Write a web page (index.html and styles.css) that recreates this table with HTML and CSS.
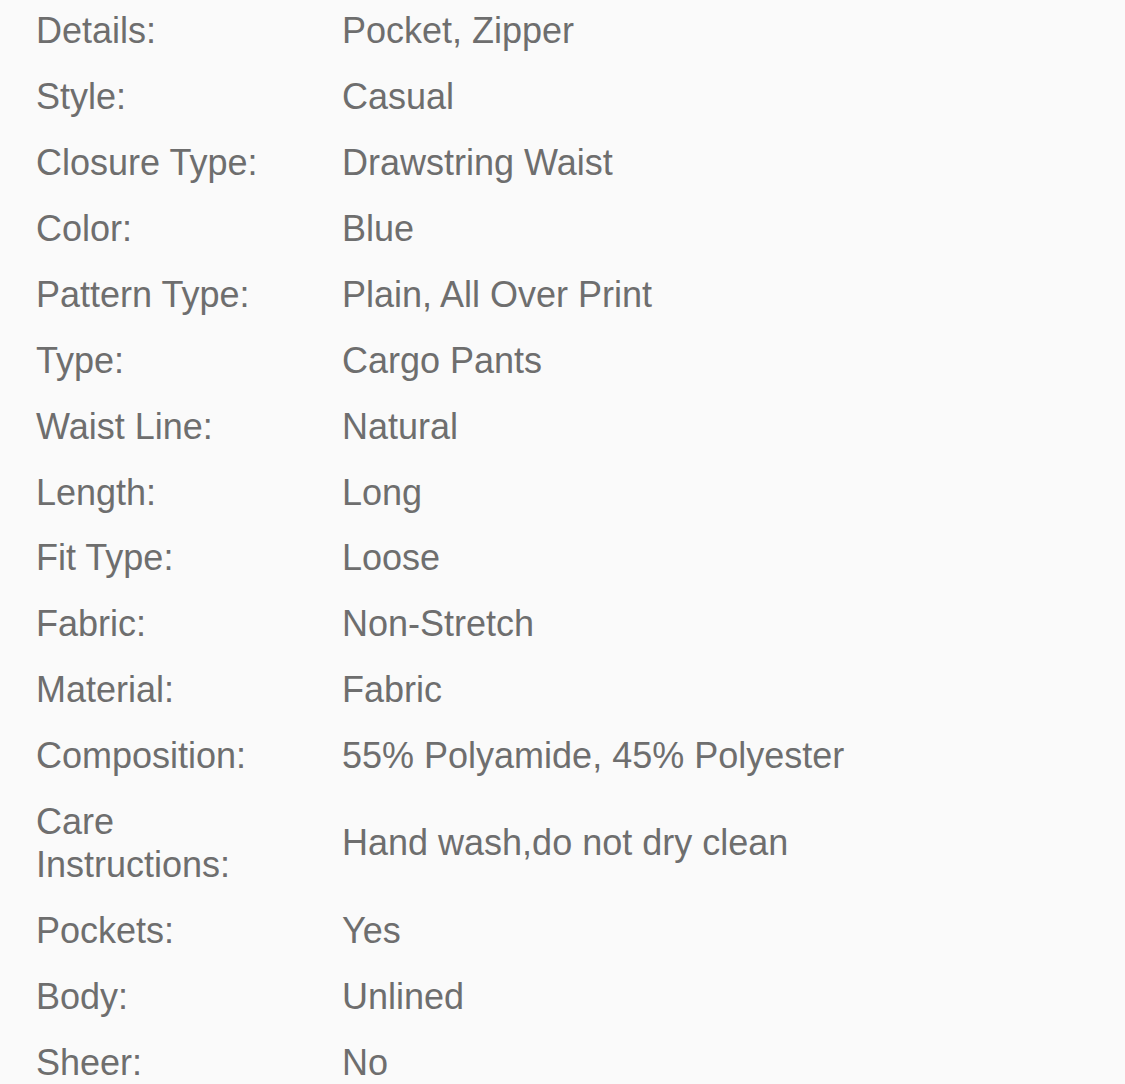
FILE: index.html
```html
<!DOCTYPE html>
<html>
<head>
<meta charset="utf-8">
<link rel="stylesheet" href="styles.css">
</head>
<body>
<div class="specs">
  <div class="row"><div class="label">Details:</div><div class="value">Pocket, Zipper</div></div>
  <div class="row"><div class="label">Style:</div><div class="value">Casual</div></div>
  <div class="row"><div class="label">Closure Type:</div><div class="value">Drawstring Waist</div></div>
  <div class="row"><div class="label">Color:</div><div class="value">Blue</div></div>
  <div class="row"><div class="label">Pattern Type:</div><div class="value">Plain, All Over Print</div></div>
  <div class="row"><div class="label">Type:</div><div class="value">Cargo Pants</div></div>
  <div class="row"><div class="label">Waist Line:</div><div class="value">Natural</div></div>
  <div class="row"><div class="label">Length:</div><div class="value">Long</div></div>
  <div class="row"><div class="label">Fit Type:</div><div class="value">Loose</div></div>
  <div class="row"><div class="label">Fabric:</div><div class="value">Non-Stretch</div></div>
  <div class="row"><div class="label">Material:</div><div class="value">Fabric</div></div>
  <div class="row"><div class="label">Composition:</div><div class="value">55% Polyamide, 45% Polyester</div></div>
  <div class="row"><div class="label">Care Instructions:</div><div class="value">Hand wash,do not dry clean</div></div>
  <div class="row"><div class="label">Pockets:</div><div class="value">Yes</div></div>
  <div class="row"><div class="label">Body:</div><div class="value">Unlined</div></div>
  <div class="row"><div class="label">Sheer:</div><div class="value">No</div></div>
</div>
</body>
</html>
```
FILE: styles.css
```css
html, body {
  margin: 0;
  padding: 0;
  background: #fafafa;
}
body {
  font-family: "Liberation Sans", Arial, sans-serif;
  font-size: 36px;
  line-height: 43px;
  color: #6e6e6e;
}
.specs {
  margin-top: -2px;
  padding-left: 36px;
}
.row {
  display: flex;
  align-items: center;
  padding: 11.45px 0;
}
.label {
  width: 250px;
  margin-right: 56px;
  flex: none;
}
.value {
  flex: 1;
}
```
